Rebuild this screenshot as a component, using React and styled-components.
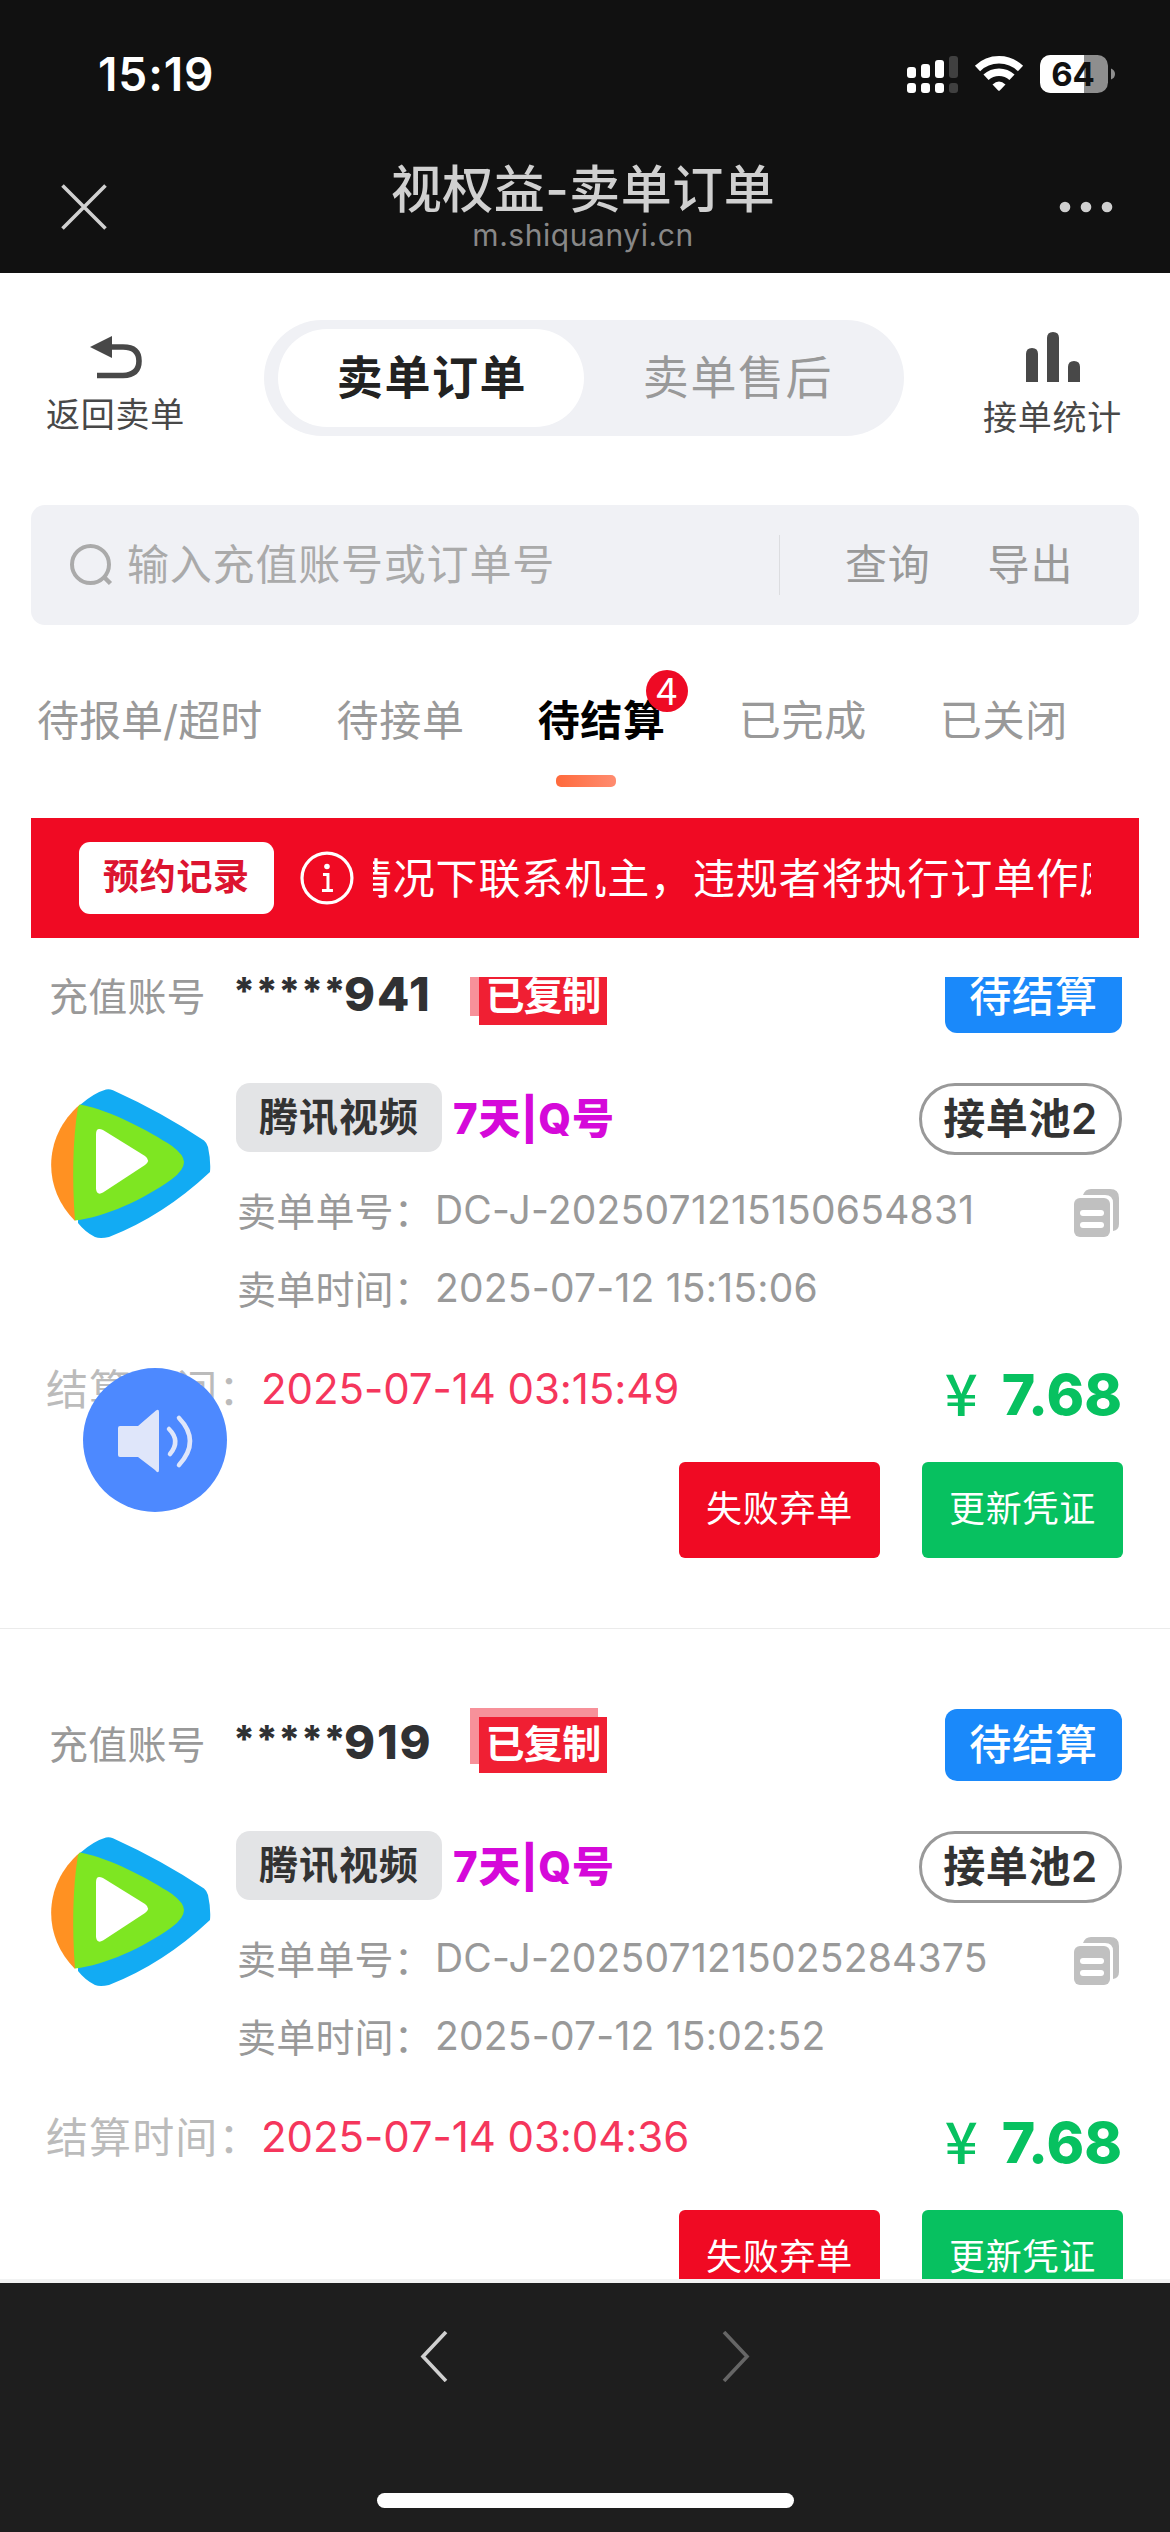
import React from "react"
import styled, { createGlobalStyle, css } from "styled-components"

const GlobalStyle = createGlobalStyle`
  * {
    box-sizing: border-box;
  }

  body {
    margin: 0;
    background: #fff;
    font-family: Inter, "Noto Sans CJK SC", sans-serif;
  }
`

const Screen = styled.div`
  width: 1170px;
  height: 2532px;
  display: flex;
  flex-direction: column;
  overflow: hidden;
  background: #fff;
  white-space: nowrap;
`

/* browser chrome */

const Header = styled.header`
  flex: none;
  height: 273px;
  background: #111;
`

const StatusBar = styled.div`
  height: 148px;
  padding: 0 55px 0 98px;
  display: flex;
  align-items: center;
  justify-content: space-between;
`

const Clock = styled.span`
  color: #fff;
  font-size: 46px;
  font-weight: 600;
  letter-spacing: 0.9px;
`

const TitleBar = styled.div`
  height: 125px;
  padding: 0 57px 0 61px;
  display: flex;
  justify-content: space-between;
`

const TitleIcon = styled.svg`
  margin-top: 36px;
`

const PageTitle = styled.h1`
  margin: 8px 0 0;
  color: #d0d0d0;
  font-size: 51px;
  font-weight: 500;
  line-height: 68px;
  letter-spacing: 0.5px;
  text-align: center;
`

const PageUrl = styled.div`
  color: #888;
  font-size: 30px;
  line-height: 36px;
  margin-top: -7px;
  letter-spacing: 0.55px;
  text-align: center;
`

/* top switch */

const TopBar = styled.div`
  flex: none;
  height: 163px;
  margin-top: 47px;
  padding: 0 48px 0 46px;
  display: flex;
  justify-content: space-between;
`

const TopAction = styled.div`
  width: 139px;
  display: flex;
  flex-direction: column;
  align-items: center;
  color: #484848;
  font-size: 34px;
  line-height: 40px;
  letter-spacing: 0.8px;

  svg {
    margin-top: ${props => props.$iconTop}px;
    margin-bottom: 16px;
  }
`

const Switch = styled.div`
  width: 640px;
  height: 116px;
  padding: 9px 14px;
  display: flex;
  border-radius: 58px;
  background: #f0f1f5;
`

const SwitchItem = styled.div`
  width: 306px;
  height: 98px;
  border-radius: 49px;
  color: #999;
  font-size: 46px;
  line-height: 96px;
  letter-spacing: 1.6px;
  text-indent: 2px;
  text-align: center;

  ${props =>
    props.$active &&
    css`
      background: #fff;
      color: #222;
      font-weight: 600;
    `}
`

/* search */

const SearchBar = styled.div`
  flex: none;
  height: 120px;
  margin: 22px 31px 0;
  padding-left: 39px;
  display: flex;
  align-items: center;
  border-radius: 14px;
  background: #f0f1f5;
  color: #999;
  font-size: 42px;
  line-height: 60px;
  letter-spacing: 0.8px;
`

const Placeholder = styled.span`
  flex: none;
  width: 666px;
  margin-top: -1px;
  padding-left: 14px;
  color: #aaa;
`

const Divider = styled.i`
  width: 1px;
  height: 60px;
  margin: 0 65px 0 0;
  background: #dcdde0;
`

const SearchAction = styled.span`
  margin: -1px 57px 0 0;
`

/* tabs */

const Tabs = styled.nav`
  flex: none;
  height: 193px;
  padding: 66px 0 0 37px;
  display: flex;
  gap: 73px;
`

const Tab = styled.div`
  position: relative;
  height: 96px;
  display: flex;
  flex-direction: column;
  justify-content: space-between;
  color: ${props => (props.$active ? "#000" : "#999")};
  font-size: 42px;
  font-weight: ${props => (props.$active ? 600 : 400)};
  line-height: 60px;
  letter-spacing: 0.7px;

  &:first-child {
    margin-right: 1.4px;
    letter-spacing: 0;
  }
`

const TabLine = styled.i`
  width: 60px;
  height: 12px;
  margin-left: 18px;
  border-radius: 5px;
  background: linear-gradient(90deg, #ff6a3c, #ff8c70);
`

const Badge = styled.span`
  position: absolute;
  top: -21px;
  right: -22px;
  width: 42px;
  height: 42px;
  border-radius: 50%;
  background: #ee0a24;
  color: #fff;
  font-family: "Noto Sans CJK SC", sans-serif;
  font-size: 38px;
  font-weight: 400;
  line-height: 38px;
  letter-spacing: 0;
  text-align: center;
`

/* notice */

const Notice = styled.div`
  flex: none;
  height: 120px;
  margin: 0 31px;
  padding: 0 48px;
  display: flex;
  align-items: center;
  background: #f00a23;
`

const NoticeButton = styled.div`
  width: 195px;
  height: 72px;
  margin-right: 26px;
  border-radius: 11px;
  background: #fff;
  color: #dc1430;
  font-size: 36px;
  font-weight: 600;
  line-height: 70px;
  letter-spacing: 0.7px;
  text-align: center;
`

const NoticeWindow = styled.div`
  width: 719px;
  margin: 2px 0 0 19px;
  overflow: hidden;
  color: #fff;
  font-size: 42px;
  line-height: 64px;
  letter-spacing: 0.9px;
`

const NoticeText = styled.div`
  margin-left: -23px;
`

/* orders */

const List = styled.main`
  flex: none;
  height: 1302px;
  margin-top: 39px;
  overflow: hidden;
`

// the list is scrolled by 96px
const ListContent = styled.div`
  margin-top: -96px;
`

const Card = styled.section`
  height: 748px;
  padding: 80px 48px 0 49px;
  border-bottom: 1px solid #ebebeb;
`

const CardHead = styled.div`
  height: 72px;
  display: flex;
  align-items: center;
`

const AccountLabel = styled.span`
  width: 184px;
  margin-top: -7px;
  color: #999;
  font-size: 39px;
  letter-spacing: 0.2px;
`

const Account = styled.span`
  width: 237px;
  display: flex;
  color: #303133;
  font-size: 47px;
  font-weight: 800;
  letter-spacing: 1.8px;
  line-height: 60px;
  margin-top: -6px;
`

const Mask = styled.span`
  width: 111px;
  font-size: 38px;
  line-height: 54px;
  letter-spacing: 0.5px;
  font-feature-settings: "calt" 0;
`

const Stamp = styled.span`
  position: relative;
  align-self: flex-start;
  width: 128px;
  height: 56px;
  margin: 8px 0 0 9px;
  background: #f01f33;
  color: #fff;
  font-size: 39px;
  font-weight: 700;
  line-height: 53px;
  letter-spacing: -0.7px;
  text-align: center;

  &::before {
    content: "";
    position: absolute;
    z-index: -1;
    left: -9px;
    top: -9px;
    width: 128px;
    height: 56px;
    background: #f7919a;
  }
`

const StampWrap = styled.div`
  position: relative;
  z-index: 0;
  display: flex;
  height: 72px;
`

const StateTag = styled.span`
  width: 177px;
  height: 72px;
  margin-left: auto;
  border-radius: 12px;
  background: #1a89fa;
  color: #fff;
  font-size: 42px;
  font-weight: 500;
  line-height: 71px;
  letter-spacing: 0.8px;
  text-align: center;
`

const Product = styled.div`
  height: 245px;
  margin-top: 50px;
  padding-left: 2px;
  display: flex;
`

const Logo = styled.svg`
  flex: none;
  margin: 6px 25px 0 0;
`

const Detail = styled.div`
  flex: 1;
`

const ProductRow = styled.div`
  height: 72px;
  margin-bottom: 17px;
  display: flex;
`

const Brand = styled.span`
  width: 206px;
  height: 69px;
  border-radius: 14px;
  background: #e3e4e6;
  color: #333;
  font-size: 39px;
  font-weight: 600;
  line-height: 67px;
  letter-spacing: 1px;
  text-align: center;
`

const Plan = styled.span`
  margin-left: 11px;
  color: #d509d9;
  font-size: 42px;
  font-weight: 800;
  line-height: 72px;
  letter-spacing: 0.8px;
`

const Pool = styled.span`
  width: 203px;
  height: 72px;
  margin-left: auto;
  border: 3px solid #999;
  border-radius: 36px;
  color: #333;
  font-size: 42px;
  font-weight: 600;
  line-height: 66px;
  letter-spacing: 0.6px;
  text-align: center;
`

const InfoRow = styled.div`
  height: 78px;
  padding-bottom: 3px;
  display: flex;
  align-items: center;
  color: #999;
  font-size: 39px;

  svg {
    margin: 6px 3px 0 auto;
  }
`

const InfoLabel = styled.span`
  width: 199px;
  margin-top: -2px;
  padding-left: 1px;
  letter-spacing: 0.2px;
`

const InfoValue = styled.span`
  letter-spacing: 0.22px;
`

const SettleRow = styled.div`
  height: 80px;
  margin-top: 24px;
  display: flex;
  align-items: center;
`

const SettleLabel = styled.span`
  width: 215px;
  margin: -12px 0 0 -3px;
  color: #bbb;
  font-size: 42px;
  letter-spacing: 1.1px;
`

const SettleTime = styled.span`
  margin-top: -8px;
  color: #f5365c;
  font-size: 42px;
  letter-spacing: -0.08px;
`

const Price = styled.span`
  margin: 5px 0 0 auto;
  display: flex;
  align-items: center;
  gap: 24px;
  color: #07c160;
  font-size: 57px;
  font-weight: 800;
  line-height: 80px;
`

const Yen = styled.span`
  margin-top: -8px;
  font-family: "Noto Sans CJK SC", sans-serif;
  font-size: 58px;
  font-weight: 500;
`

const Actions = styled.div`
  margin: 30px -1px 0 0;
  display: flex;
  justify-content: flex-end;
  gap: 42px;
`

const ActionButton = styled.div`
  width: 201px;
  height: 96px;
  border-radius: 6px;
  background: ${props => props.$color};
  color: #fff;
  font-size: 36px;
  line-height: 94px;
  letter-spacing: 0.7px;
  text-align: center;
`

const SoundButton = styled.div`
  position: absolute;
  left: 83px;
  top: 1368px;
  width: 144px;
  height: 144px;
  border-radius: 50%;
  background: #4d89ff;
`

/* bottom bar */

const Footer = styled.footer`
  flex: 1;
  border-top: 4px solid #f2f3f3;
  background: #1e1e1e;
  display: flex;
  flex-direction: column;
  align-items: center;
`

const NavArrows = styled.div`
  width: 330px;
  margin-top: 48px;
  display: flex;
  justify-content: space-between;
`

const HomeIndicator = styled.div`
  width: 417px;
  height: 15px;
  margin-top: 111px;
  border-radius: 8px;
  background: #fff;
`

const StatusIcons = () => (
  <svg width="210" height="40" viewBox="905 54 210 40">
    <g fill="#fff">
      <rect x="907" y="67" width="9" height="11" rx="3" />
      <rect x="921" y="64" width="9" height="14" rx="3" />
      <rect x="935" y="60" width="9" height="18" rx="3" />
      <rect x="907" y="83" width="9" height="10" rx="3" />
      <rect x="921" y="83" width="9" height="10" rx="3" />
      <rect x="935" y="83" width="9" height="10" rx="3" />
    </g>
    <g fill="#404040">
      <rect x="949" y="56" width="9" height="22" rx="3" />
      <rect x="949" y="83" width="9" height="10" rx="3" />
    </g>
    <g fill="none" stroke="#fff" strokeWidth="7.5">
      <path d="M977.5 68.5A31 31 0 0 1 1020.500 68.500" />
      <path d="M986 77.300A19 19 0 0 1 1012 77.300" />
    </g>
    <path
      d="M992.500 84.500Q999 78.500 1005.500 84.500L999.800 90.500Q999 91.200 998.200 90.500Z"
      fill="#fff"
    />
    <clipPath id="battery">
      <rect x="1040" y="55" width="68" height="38" rx="10.500" />
    </clipPath>
    <g clipPath="url(#battery)">
      <rect x="1040" y="55" width="68" height="38" fill="#8e8e8e" />
      <rect x="1040" y="55" width="44" height="38" fill="#fff" />
    </g>
    <path d="M1111 68.500Q1115 70 1115 74T1111 79.500Z" fill="#8e8e8e" />
    <text
      x="1073"
      y="86"
      fill="#111"
      fontSize="33"
      fontWeight="700"
      textAnchor="middle"
    >
      64
    </text>
  </svg>
)

const VideoLogo = () => (
  <Logo width="160" height="150" viewBox="0 0 160 150">
    <path
      d="M29 16Q43 4 55 .6Q58 -.4 62 1.300Q110 23 153 51.500Q156 54 157 58Q160 72 159 83Q112 127 58 148Q49 150 44 148Q34 143 27 134Z"
      fill="#12abf3"
    />
    <path d="M29 15.500C-7 46 -10 98 24 132L30 75Z" fill="#ff9122" />
    <path
      d="M29 15.500C59 21 98 42 121 57Q133 66 133 73Q133 81 121 90C92 111 54 128 24 131.500C21 92 21.500 52 27 18Z"
      fill="#7ee622"
    />
    <path
      d="M45 45Q45 37.500 52 41L94 67Q100 71.500 94 76L52 103.500Q46 107 45 100Z"
      fill="#fff"
    />
  </Logo>
)

const CopyIcon = () => (
  <svg width="45" height="48" viewBox="0 0 45 48">
    <path
      d="M9 6Q11 0 17 0H36Q45 0 45 9V35Q45 41 39 42V14Q39 6 31 6Z"
      fill="#c0c0c0"
    />
    <rect y="9" width="36" height="39" rx="6" fill="#c0c0c0" />
    <rect x="6" y="21" width="24" height="6" rx="3" fill="#fff" />
    <rect x="6" y="33" width="24" height="6" rx="3" fill="#fff" />
  </svg>
)

const orders = [
  {
    account: "941",
    number: "DC-J-2025071215150654831",
    created: "2025-07-12 15:15:06",
    settled: "2025-07-14 03:15:49",
  },
  {
    account: "919",
    number: "DC-J-2025071215025284375",
    created: "2025-07-12 15:02:52",
    settled: "2025-07-14 03:04:36",
  },
]

const OrderCard = ({ order }) => (
  <Card>
    <CardHead>
      <AccountLabel>充值账号</AccountLabel>
      <Account>
        <Mask>*****</Mask>
        {order.account}
      </Account>
      <StampWrap>
        <Stamp>已复制</Stamp>
      </StampWrap>
      <StateTag>待结算</StateTag>
    </CardHead>
    <Product>
      <VideoLogo />
      <Detail>
        <ProductRow>
          <Brand>腾讯视频</Brand>
          <Plan>7天|Q号</Plan>
          <Pool>接单池2</Pool>
        </ProductRow>
        <InfoRow>
          <InfoLabel>卖单单号：</InfoLabel>
          <InfoValue>{order.number}</InfoValue>
          <CopyIcon />
        </InfoRow>
        <InfoRow>
          <InfoLabel>卖单时间：</InfoLabel>
          <InfoValue>{order.created}</InfoValue>
        </InfoRow>
      </Detail>
    </Product>
    <SettleRow>
      <SettleLabel>结算时间：</SettleLabel>
      <SettleTime>{order.settled}</SettleTime>
      <Price>
        <Yen>¥</Yen>7.68
      </Price>
    </SettleRow>
    <Actions>
      <ActionButton $color="#f00a23">失败弃单</ActionButton>
      <ActionButton $color="#07c160">更新凭证</ActionButton>
    </Actions>
  </Card>
)

const tabs = ["待报单/超时", "待接单", "待结算", "已完成", "已关闭"]

const App = () => (
  <Screen>
    <GlobalStyle />
    <Header>
      <StatusBar>
        <Clock>15:19</Clock>
        <StatusIcons />
      </StatusBar>
      <TitleBar>
        <TitleIcon width="46" height="46" viewBox="0 0 46 46">
          <path
            d="M1.500 1.500L44.500 44.500M44.500 1.500L1.500 44.500"
            stroke="#d0d0d0"
            strokeWidth="3.600"
          />
        </TitleIcon>
        <div>
          <PageTitle>视权益-卖单订单</PageTitle>
          <PageUrl>m.shiquanyi.cn</PageUrl>
        </div>
        <TitleIcon width="54" height="46" viewBox="0 0 54 46" fill="#d0d0d0">
          <circle cx="6" cy="23" r="5.300" />
          <circle cx="27" cy="23" r="5.300" />
          <circle cx="48" cy="23" r="5.300" />
        </TitleIcon>
      </TitleBar>
    </Header>

    <TopBar>
      <TopAction $iconTop={16}>
        <svg width="52" height="43" viewBox="0 0 52 43">
          <path d="M0 11L22 0V22Z" fill="#484848" />
          <path
            d="M21 11H33Q49 11 49 25T33 39.500H7"
            fill="none"
            stroke="#484848"
            strokeWidth="5.600"
          />
        </svg>
        返回卖单
      </TopAction>
      <Switch>
        <SwitchItem $active>卖单订单</SwitchItem>
        <SwitchItem>卖单售后</SwitchItem>
      </Switch>
      <TopAction $iconTop={12}>
        <svg width="54" height="50" viewBox="0 0 54 50" fill="#484848">
          <path d="M0 50V22Q0 16 6 16T12 22V50Z" />
          <path d="M21 50V6Q21 0 27 0T33 6V50Z" />
          <path d="M42 50V35Q42 29 48 29T54 35V50Z" />
        </svg>
        接单统计
      </TopAction>
    </TopBar>

    <SearchBar>
      <svg width="43" height="42" viewBox="0 0 43 42" fill="none">
        <circle cx="20.500" cy="20.500" r="18.500" stroke="#aaa" strokeWidth="4" />
        <path d="M34 33L40.500 39.500" stroke="#aaa" strokeWidth="4.500" />
      </svg>
      <Placeholder>输入充值账号或订单号</Placeholder>
      <Divider />
      <SearchAction>查询</SearchAction>
      <SearchAction>导出</SearchAction>
    </SearchBar>

    <Tabs>
      {tabs.map((tab, i) => (
        <Tab key={tab} $active={i === 2}>
          {tab}
          {i === 2 && <TabLine />}
          {i === 2 && <Badge>4</Badge>}
        </Tab>
      ))}
    </Tabs>

    <Notice>
      <NoticeButton>预约记录</NoticeButton>
      <svg width="54" height="54" viewBox="0 0 54 54" fill="none" stroke="#fff">
        <circle cx="27" cy="27" r="25" strokeWidth="3.200" />
        <circle cx="27" cy="15.500" r="2.800" fill="#fff" stroke="none" />
        <path d="M23 23.500H28V39M22 39.500H33" strokeWidth="3" />
      </svg>
      <NoticeWindow>
        <NoticeText>情况下联系机主，违规者将执行订单作废</NoticeText>
      </NoticeWindow>
    </Notice>

    <List>
      <ListContent>
        {orders.map(order => (
          <OrderCard key={order.number} order={order} />
        ))}
      </ListContent>
    </List>

    <SoundButton>
      <svg width="144" height="144" viewBox="0 0 144 144">
        <path
          d="M37 58H55L73 42.500Q76 40.500 76 44V101Q76 107 72 102L55 89H37Q35 89 35 87V60Q35 58 37 58Z"
          fill="#dfe6fa"
        />
        <path
          d="M86 61Q98 73 87 86M96 50Q118 73 96 97"
          fill="none"
          stroke="#dfe6fa"
          strokeWidth="4.500"
          strokeLinecap="round"
        />
      </svg>
    </SoundButton>

    <Footer>
      <NavArrows>
        <svg width="28" height="51" viewBox="0 0 28 51" fill="none">
          <path d="M26 1L3 25.500L26 50" stroke="#d0d0d0" strokeWidth="3.600" />
        </svg>
        <svg width="28" height="51" viewBox="0 0 28 51" fill="none">
          <path d="M2 1L25 25.500L2 50" stroke="#666" strokeWidth="3.600" />
        </svg>
      </NavArrows>
      <HomeIndicator />
    </Footer>
  </Screen>
)

export default App
